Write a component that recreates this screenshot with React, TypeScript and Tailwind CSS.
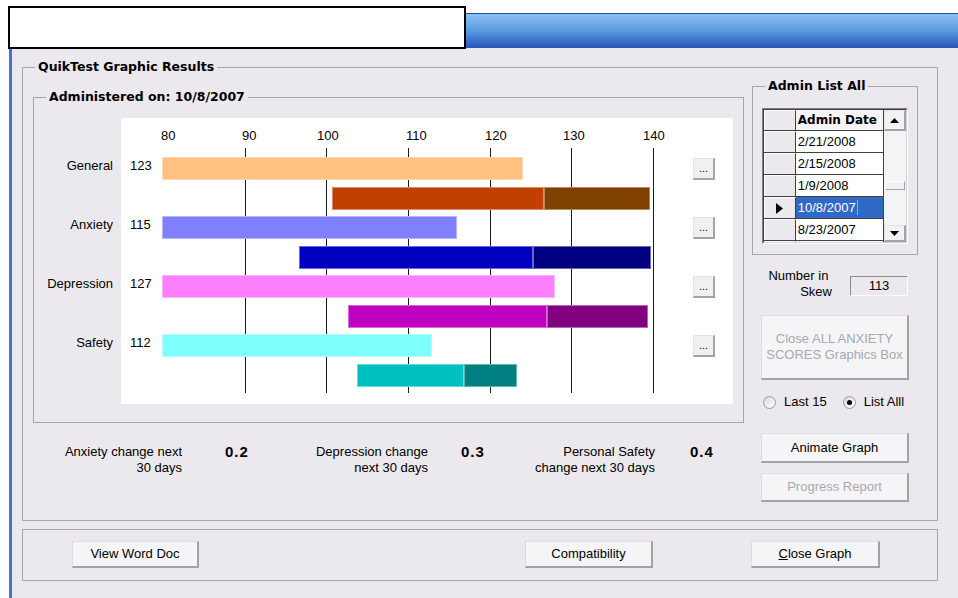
import React from 'react';

type ScoreRow = {
  label: string;
  score: number;
  end: number;
  band: [number, number, number];
  light: string;
  mid: string;
  deep: string;
};

const rows: ScoreRow[] = [
  { label: 'General', score: 123, end: 124.1, band: [100.7, 126.7, 139.6], light: 'bg-[#ffc080]', mid: 'bg-[#c04000]', deep: 'bg-[#804000]' },
  { label: 'Anxiety', score: 115, end: 116.0, band: [96.7, 125.3, 139.8], light: 'bg-[#8080ff]', mid: 'bg-[#0000c0]', deep: 'bg-[#000080]' },
  { label: 'Depression', score: 127, end: 128.0, band: [102.7, 127.0, 139.4], light: 'bg-[#ff80ff]', mid: 'bg-[#c000c0]', deep: 'bg-[#800080]' },
  { label: 'Safety', score: 112, end: 112.9, band: [103.8, 116.9, 123.4], light: 'bg-[#80ffff]', mid: 'bg-[#00c0c0]', deep: 'bg-[#008080]' },
];

const ticks = [
  { value: 80, left: 40 },
  { value: 90, left: 121 },
  { value: 100, left: 196 },
  { value: 110, left: 285 },
  { value: 120, left: 364 },
  { value: 130, left: 442 },
  { value: 140, left: 522 },
];

const adminDates = ['2/21/2008', '2/15/2008', '1/9/2008', '10/8/2007', '8/23/2007', '6/20/2007'];

// score -> x offset inside the plot
const scoreX = (v: number) => 42 + (v - 80) * 8.165;

const ROW_PITCH = 59;

const BOLD = "font-['DejaVu_Sans',sans-serif] font-bold whitespace-nowrap";

const Group: React.FC<{ title?: string; className?: string; children: React.ReactNode }> = ({ title, className = '', children }) => (
  <fieldset className={`border border-[#a6a5aa] ${className}`}>
    {title && <legend className={`ml-[12px] px-[3px] text-[12.5px] leading-4 text-black ${BOLD}`}>{title}</legend>}
    {children}
  </fieldset>
);

const WinButton: React.FC<{ disabled?: boolean; className?: string; children: React.ReactNode }> = ({ disabled, className = '', children }) => (
  <button
    className={`flex flex-col items-center justify-center bg-[#f5f5f7] border-t border-l border-t-[#dddce1] border-l-[#dddce1] border-r-2 border-b-2 border-r-[#a3a2a7] border-b-[#a3a2a7] text-[13px] leading-4 ${disabled ? 'text-[#a9a8ad]' : 'text-black'} ${className}`}
  >
    {children}
  </button>
);

const Radio: React.FC<{ checked?: boolean; label: string }> = ({ checked, label }) => (
  <div className="flex items-center">
    <span className="flex h-[13px] w-[13px] items-center justify-center rounded-full border border-[#9a999e] bg-linear-to-br from-[#d9d8dd] to-white">
      {checked && <span className="h-[5px] w-[5px] rounded-full bg-black" />}
    </span>
    <span className="ml-[8px] text-[13px] leading-4">{label}</span>
  </div>
);

const Arrow: React.FC<{ up?: boolean }> = ({ up }) => (
  <svg width="9" height="5" viewBox="0 0 9 5">
    <polygon points={up ? '0,5 9,5 4.5,0' : '0,0 9,0 4.5,5'} fill="#000" />
  </svg>
);

const ScoreChart = () => (
  <div className="relative h-[286px] w-[612px] bg-white">
    {ticks.map((t) => (
      <span key={t.value} className="absolute top-[10px] text-[13px] leading-4" style={{ left: t.left }}>
        {t.value}
      </span>
    ))}
    {ticks.slice(1).map((t) => (
      <div key={t.value} className="absolute top-[30px] h-[245px] w-px bg-[#1a1a1a]" style={{ left: Math.round(scoreX(t.value)) }} />
    ))}
    {rows.map((r, i) => {
      const top = 39 + i * ROW_PITCH;
      const [a, b, c] = r.band;
      return (
        <React.Fragment key={r.label}>
          <span className="absolute left-[9px] flex h-[23px] items-center text-[13px]" style={{ top: top - 3 }}>
            {r.score}
          </span>
          <div
            className={`absolute h-[23px] border border-white/40 ${r.light}`}
            style={{ top, left: 41, width: scoreX(r.end) - 41 }}
          />
          <div
            className={`absolute h-[23px] border border-white/40 ${r.mid}`}
            style={{ top: top + 30, left: scoreX(a), width: scoreX(b) - scoreX(a) }}
          />
          <div
            className={`absolute h-[23px] border border-white/40 ${r.deep}`}
            style={{ top: top + 30, left: scoreX(b), width: scoreX(c) - scoreX(b) }}
          />
          <button
            className="absolute left-[572px] flex h-[22px] w-[22px] items-end justify-center bg-[#f0f0f2] border-t border-l border-t-[#e2e1e6] border-l-[#e2e1e6] border-r-2 border-b-2 border-r-[#a3a2a7] border-b-[#a3a2a7] pb-[4px] text-[11px] leading-none"
            style={{ top: top + 1 }}
          >
            ...
          </button>
        </React.Fragment>
      );
    })}
  </div>
);

const ChangeNote: React.FC<{ lines: [string, string]; value: string; width: number; gap: number }> = ({ lines, value, width, gap }) => (
  <div className="flex items-start">
    <div className="text-right text-[13px] leading-4" style={{ width }}>
      <div>{lines[0]}</div>
      <div>{lines[1]}</div>
    </div>
    <div className="w-[40px] text-[15px] font-bold leading-4 tracking-[1px]" style={{ marginLeft: gap }}>
      {value}
    </div>
  </div>
);

const AdminGrid = () => (
  <div className="ml-[9px] mt-[14px] h-[136px] w-[146px] border-t border-l border-t-[#808080] border-l-[#808080] border-r border-b border-r-white border-b-white">
    <div className="flex h-[134px] w-[144px] overflow-hidden border-t border-l border-t-[#404040] border-l-[#404040] border-r border-b border-r-[#d4d3d8] border-b-[#d4d3d8]">
      <div className="w-[121px] overflow-hidden">
        <div className="flex h-[21px] border-b border-[#404040]">
          <div className="w-[32px] border-r border-[#404040] bg-[#ebe9ed] border-t border-l border-t-white border-l-white" />
          <div className={`flex w-[89px] items-center overflow-hidden bg-[#f4f3f6] pl-[2px] text-[12px] border-r border-[#404040] ${BOLD}`}>Admin Date</div>
        </div>
        {adminDates.map((d, i) => {
          const current = i === 3;
          return (
            <div key={d} className="flex h-[22px] border-b border-[#404040]">
              <div className="flex w-[32px] items-center justify-center border-r border-[#404040] bg-[#ebe9ed] border-t border-l border-t-white border-l-white">
                {current && (
                  <svg width="7" height="11" viewBox="0 0 7 11">
                    <polygon points="0,0 7,5.5 0,11" fill="#000" />
                  </svg>
                )}
              </div>
              <div className={`flex w-[89px] items-center pl-[2px] text-[13px] border-r border-[#404040] ${current ? 'bg-[#316ac5] text-white' : 'bg-white text-black'}`}>
                {d}
                {current && <span className="ml-px h-[15px] w-px bg-[#f0a030]" />}
              </div>
            </div>
          );
        })}
      </div>
      <div className="flex w-[22px] flex-col bg-[#f4f3f6]">
        <div className="flex h-[21px] items-center justify-center bg-[#f2f2f4] border-t border-l border-t-[#e4e3e8] border-l-[#e4e3e8] border-r-2 border-b-2 border-r-[#a3a2a7] border-b-[#a3a2a7]">
          <Arrow up />
        </div>
        <div className="h-[50px]" />
        <div className="mx-[1px] h-[9px] bg-[#f2f2f4] border-t border-l border-t-white border-l-white border-r border-b border-r-[#a3a2a7] border-b-[#a3a2a7]" />
        <div className="flex-1" />
        <div className="flex h-[17px] items-center justify-center bg-[#f2f2f4] border-t border-l border-t-[#e4e3e8] border-l-[#e4e3e8] border-r-2 border-b-2 border-r-[#a3a2a7] border-b-[#a3a2a7]">
          <Arrow />
        </div>
      </div>
    </div>
  </div>
);

export default function App() {
  return (
    <div className="relative h-[598px] w-[958px] overflow-hidden bg-white font-['Liberation_Sans',Arial,sans-serif] text-black">
      {/* caption box sitting over the title bar */}
      <div className="absolute left-[8px] top-[6px] z-10 h-[43px] w-[458px] border-2 border-black bg-white" />

      <div className="ml-[9px] mt-[13px] h-[35px] border-t border-[#1d4aa6] bg-linear-to-b from-[#8cc2f2] via-[#5a98e0] to-[#2856b9]" />

      <div className="ml-[9px] h-[550px] border-l-[3px] border-[#4276d6] bg-[#ebe9ed] pl-[10px] pt-[11px]">
        <Group title="QuikTest Graphic Results" className="h-[462px] w-[916px]">
          <div className="flex pl-[10px] pt-[3px]">
            <div className="mt-[11px] flex flex-col">
              <Group title="Administered on: 10/8/2007" className="h-[334px] w-[711px]">
                <div className="mt-[13px] flex">
                  <div className="flex w-[87px] flex-col gap-[36px] pr-[8px] pt-[36px]">
                    {rows.map((r) => (
                      <div key={r.label} className="flex h-[23px] items-center justify-end text-[13px]">
                        {r.label}
                      </div>
                    ))}
                  </div>
                  <ScoreChart />
                </div>
              </Group>
              <div className="mt-[21px] flex">
                <ChangeNote lines={['Anxiety change next', '30 days']} value="0.2" width={149} gap={43} />
                <ChangeNote lines={['Depression change', 'next 30 days']} value="0.3" width={163} gap={33} />
                <ChangeNote lines={['Personal Safety', 'change next 30 days']} value="0.4" width={154} gap={35} />
              </div>
            </div>

            <div className="ml-[8px] flex flex-col">
              <Group title="Admin List All" className="h-[177px] w-[166px]">
                <AdminGrid />
              </Group>

              <div className="mt-[13px] flex h-[32px] items-start">
                <div className="w-[80px] text-right text-[13px] leading-4">
                  <div>Number in{'\u00a0'}</div>
                  <div>Skew</div>
                </div>
                <div className="ml-[18px] mt-[8px] flex h-[20px] w-[58px] items-center justify-center border-t border-l border-t-[#8d8c91] border-l-[#8d8c91] border-r border-b border-r-white border-b-white text-[13px]">
                  113
                </div>
              </div>

              <WinButton disabled className="ml-[9px] mt-[15px] h-[65px] w-[148px]">
                <span>Close ALL ANXIETY</span>
                <span>SCORES Graphics Box</span>
              </WinButton>

              <div className="ml-[11px] mt-[15px] flex h-[14px] items-center gap-[16px]">
                <Radio label="Last 15" />
                <Radio checked label="List Alll" />
              </div>

              <WinButton className="ml-[9px] mt-[24px] h-[30px] w-[148px]">Animate Graph</WinButton>
              <WinButton disabled className="ml-[9px] mt-[10px] h-[29px] w-[148px]">Progress Report</WinButton>
            </div>
          </div>
        </Group>

        <Group className="mt-[8px] h-[52px] w-[916px]">
          <div className="flex pl-[49px] pt-[11px]">
            <WinButton className="h-[27px] w-[127px]">View Word Doc</WinButton>
            <WinButton className="ml-[326px] h-[27px] w-[128px]">Compatibility</WinButton>
            <WinButton className="ml-[98px] h-[27px] w-[129px]">
              <span>
                <span className="underline">C</span>lose Graph
              </span>
            </WinButton>
          </div>
        </Group>
      </div>
    </div>
  );
}
